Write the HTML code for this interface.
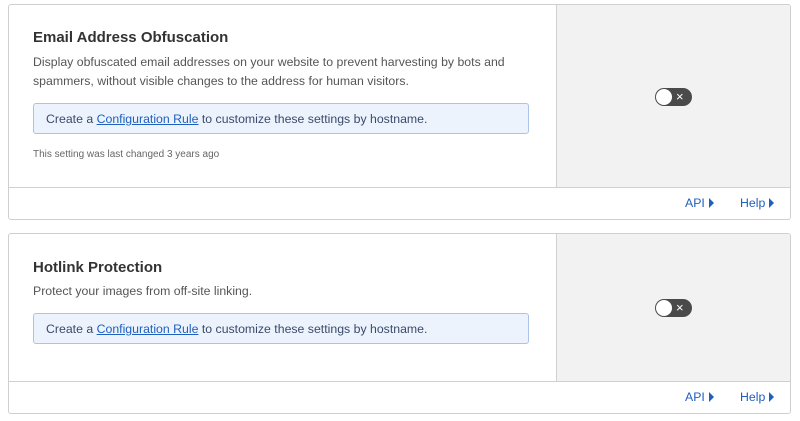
<!DOCTYPE html><html><head><style>
body{margin:0;background:#fff;font-family:"Liberation Sans",sans-serif;width:800px;height:421px;overflow:hidden;position:relative}
.card{position:absolute;left:8px;width:781px;border:1px solid #cfcfcf;border-radius:3px;background:#fff;overflow:hidden}
.main{position:absolute;left:0;top:0;width:547px;border-right:1px solid #d0d0d0;border-bottom:1px solid #d0d0d0}
.side{position:absolute;left:548px;top:0;right:0;background:#f2f2f2;border-bottom:1px solid #d0d0d0}
h2{position:absolute;left:24px;margin:0;font-size:15px;font-weight:bold;color:#333}
.d{position:absolute;left:24px;margin:0;font-size:12.3px;line-height:19px;color:#555;width:500px}
.box{position:absolute;left:24px;width:496px;height:31px;border:1px solid #a9c4e8;background:#ecf3fc;border-radius:3px;font-size:12.3px;line-height:31px;color:#3a4a6b;padding-left:12px;box-sizing:border-box}
.box a{color:#1f5fbf;text-decoration:underline}
.small{position:absolute;left:24px;font-size:10px;color:#666}
.tg{position:absolute;width:37px;height:18px;border-radius:9px;background:#4a4a4a}
.tg:before{content:"";position:absolute;left:1px;top:1px;width:16px;height:16px;border-radius:50%;background:#fff}
.tg:after{content:"×";position:absolute;left:21px;top:0;color:#fff;font-size:13px;line-height:18px}
.f{position:absolute;font-size:12.3px;color:#1f5fbf}
.f i{display:inline-block;width:0;height:0;border-left:5px solid #1f5fbf;border-top:5px solid transparent;border-bottom:5px solid transparent;margin-left:4px;vertical-align:-1px}
</style></head><body>
<div class="card" style="top:4px;height:214px">
<div class="main" style="height:182px">
<h2 style="top:24px">Email Address Obfuscation</h2>
<p class="d" style="top:48px">Display obfuscated email addresses on your website to prevent harvesting by bots and spammers, without visible changes to the address for human visitors.</p>
<div class="box" style="top:98px">Create a <a>Configuration Rule</a> to customize these settings by hostname.</div>
<div class="small" style="top:144px">This setting was last changed 3 years ago</div>
</div>
<div class="side" style="height:182px"><div class="tg" style="left:98px;top:83px"></div></div>
<div class="f" style="left:676px;top:191px">API<i></i></div>
<div class="f" style="left:731px;top:191px">Help<i></i></div>
</div>
<div class="card" style="top:233px;height:179px">
<div class="main" style="height:147px">
<h2 style="top:25px">Hotlink Protection</h2>
<p class="d" style="top:48px">Protect your images from off-site linking.</p>
<div class="box" style="top:79px">Create a <a>Configuration Rule</a> to customize these settings by hostname.</div>
</div>
<div class="side" style="height:147px"><div class="tg" style="left:98px;top:65px"></div></div>
<div class="f" style="left:676px;top:156px">API<i></i></div>
<div class="f" style="left:731px;top:156px">Help<i></i></div>
</div>
</body></html>
